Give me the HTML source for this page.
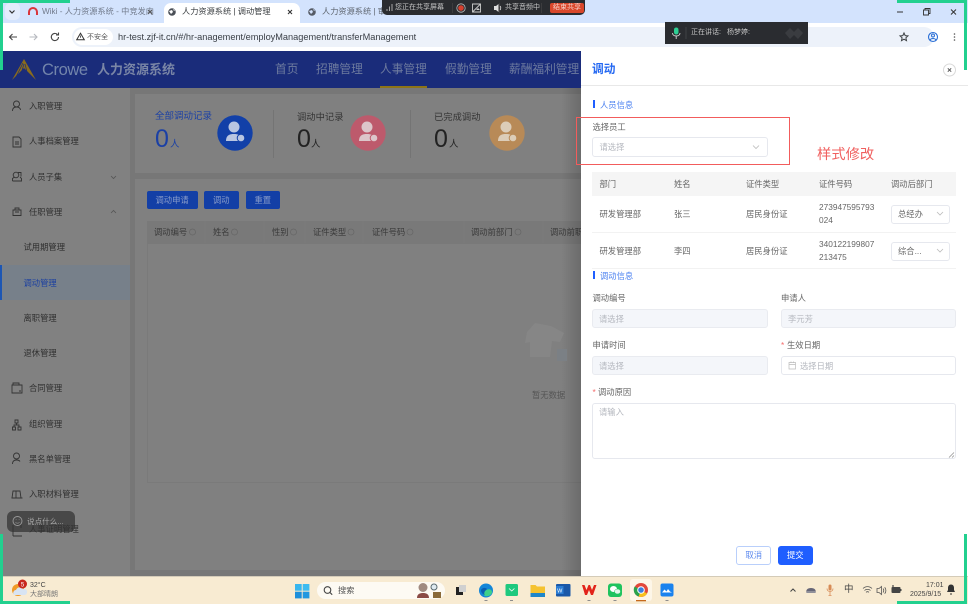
<!DOCTYPE html>
<html lang="zh">
<head>
<meta charset="utf-8">
<title>人力资源系统 | 调动管理</title>
<style>
html,body{margin:0;padding:0;background:#fff}
#p{position:relative;width:968px;height:605px;overflow:hidden;background:#fff;font-family:"Liberation Sans","Noto Sans CJK SC",sans-serif;font-size:8.3px;color:#555;filter:blur(.35px)}
.t{position:absolute;white-space:nowrap;line-height:16px;height:16px}
.r{position:absolute;box-sizing:border-box}
svg{position:absolute;left:0;top:0}
.s{color:#303030}
.h{color:#3a3a3a}
.n{color:#6e7b9f;font-size:11.7px}
.b{color:#2468f2}
.g{color:#666}
.ph{color:#b5b8bf}
.d{color:#c4c4c4;font-size:7px}
</style>
</head>
<body>
<div id="p">
<!-- browser chrome -->
<div class="r" style="left:0;top:0;width:968px;height:23px;background:#d3e3fd"></div>
<div class="r" style="left:0;top:23px;width:968px;height:28px;background:#fff"></div>
<div class="r" style="left:5px;top:3px;width:15px;height:17px;background:#e3ecfc;border-radius:5px"></div>
<div class="r" style="left:164px;top:3px;width:136px;height:20px;background:#fff;border-radius:7px 7px 0 0"></div>
<div class="r" style="left:72px;top:27px;width:862px;height:20px;background:#edf2fa;border-radius:10px"></div>
<div class="r" style="left:74px;top:29px;width:39px;height:16px;background:#fff;border-radius:8px"></div>
<div class="t" style="left:42px;top:4px;color:#727b8c;font-size:8.2px">Wiki - 人力资源系统 - 中竞发内</div>
<div class="t" style="left:182px;top:4px;color:#3c4043;font-size:8.2px">人力资源系统 | 调动管理</div>
<div class="t" style="left:322px;top:4px;color:#5f6670;font-size:8.2px">人力资源系统 | 审批</div>
<div class="t" style="left:87px;top:30px;color:#555;font-size:7px">不安全</div>
<div class="t" style="left:118px;top:29px;color:#3a3f46;font-size:9.2px">hr-test.zjf-it.cn/#/hr-anagement/employManagement/transferManagement</div>

<!-- header -->
<div class="r" style="left:0;top:51px;width:581px;height:37px;background:#1a2c7a"></div>
<div class="t" style="left:42px;top:61px;color:#7385ab;font-size:16.5px;line-height:18px;height:18px;letter-spacing:-.4px">Crowe</div>
<div class="t" style="left:97px;top:62px;color:#7a86a6;font-size:13px;font-weight:bold">人力资源系统</div>
<div class="t n" style="left:275px;top:62px">首页</div>
<div class="t n" style="left:316px;top:62px">招聘管理</div>
<div class="t n" style="left:380px;top:62px">人事管理</div>
<div class="t n" style="left:445px;top:62px">假勤管理</div>
<div class="t n" style="left:509px;top:62px">薪酬福利管理</div>
<div class="r" style="left:380px;top:86px;width:47px;height:2px;background:#8d7417"></div>

<!-- masked page -->
<div class="r" style="left:0;top:88px;width:581px;height:488px;background:#777"></div>
<div class="r" style="left:0;top:88px;width:130px;height:488px;background:#818181"></div>
<div class="r" style="left:135px;top:94px;width:446px;height:79px;background:#808080"></div>
<div class="r" style="left:135px;top:179px;width:446px;height:391px;background:#808080"></div>
<div class="r" style="left:0;top:265px;width:130px;height:35px;background:#77808a"></div>
<div class="r" style="left:0;top:265px;width:1.5px;height:35px;background:#1c56b4"></div>

<div class="t s" style="left:29px;top:98px">入职管理</div>
<div class="t s" style="left:29px;top:133px">人事档案管理</div>
<div class="t s" style="left:29px;top:169px">人员子集</div>
<div class="t s" style="left:29px;top:204px">任职管理</div>
<div class="t s" style="left:23.5px;top:239px">试用期管理</div>
<div class="t" style="left:23.5px;top:274.5px;color:#1c40a0">调动管理</div>
<div class="t s" style="left:23.5px;top:310px">离职管理</div>
<div class="t s" style="left:23.5px;top:345px">退休管理</div>
<div class="t s" style="left:29px;top:380px">合同管理</div>
<div class="t s" style="left:29px;top:415.5px">组织管理</div>
<div class="t s" style="left:29px;top:451px">黑名单管理</div>
<div class="t s" style="left:29px;top:486px">入职材料管理</div>
<div class="t s" style="left:29px;top:521px">人事证明管理</div>
<div class="r" style="left:7px;top:511px;width:68px;height:21px;background:rgba(50,50,50,.72);border-radius:6px"></div>
<div class="t" style="left:27px;top:514px;color:#aaa;font-size:7.6px">说点什么...</div>

<!-- stats -->
<div class="t" style="left:155px;top:109px;color:#1b40a5;font-size:9.5px">全部调动记录</div>
<div class="t" style="left:155px;top:125px;color:#1b40a5;font-size:25px;line-height:28px;height:28px">0</div>
<div class="t" style="left:170px;top:137px;color:#1b40a5;font-size:9.5px">人</div>
<div class="t" style="left:297px;top:109px;color:#333;font-size:9.3px">调动中记录</div>
<div class="t" style="left:297px;top:125px;color:#222;font-size:25px;line-height:28px;height:28px">0</div>
<div class="t" style="left:311px;top:137px;color:#222;font-size:9.5px">人</div>
<div class="t" style="left:434px;top:109px;color:#333;font-size:9.3px">已完成调动</div>
<div class="t" style="left:434px;top:125px;color:#222;font-size:25px;line-height:28px;height:28px">0</div>
<div class="t" style="left:449px;top:137px;color:#222;font-size:9.5px">人</div>
<div class="r" style="left:272.5px;top:110px;width:1px;height:48px;background:#747474"></div>
<div class="r" style="left:410px;top:110px;width:1px;height:48px;background:#747474"></div>

<!-- buttons -->
<div class="r" style="left:147px;top:191px;width:50.5px;height:18px;background:#133fa6;border-radius:2px"></div>
<div class="r" style="left:204px;top:191px;width:34.5px;height:18px;background:#133fa6;border-radius:2px"></div>
<div class="r" style="left:245.5px;top:191px;width:34px;height:18px;background:#133fa6;border-radius:2px"></div>
<div class="t" style="left:155.5px;top:192px;color:#8a9cc9">调动申请</div>
<div class="t" style="left:213px;top:192px;color:#8a9cc9">调动</div>
<div class="t" style="left:254.5px;top:192px;color:#8a9cc9">重置</div>

<!-- table -->
<div class="r" style="left:147px;top:221px;width:434px;height:262px;border:1px solid #7a7a7a;border-right:0"></div>
<div class="r" style="left:147px;top:221px;width:434px;height:22.5px;background:#797979"></div>
<div class="t h" style="left:154px;top:224px">调动编号</div>
<div class="t h" style="left:213px;top:224px">姓名</div>
<div class="t h" style="left:272px;top:224px">性别</div>
<div class="t h" style="left:313px;top:224px">证件类型</div>
<div class="t h" style="left:372px;top:224px">证件号码</div>
<div class="t h" style="left:471px;top:224px">调动前部门</div>
<div class="t h" style="left:550px;top:224px">调动前职</div>
<div class="t" style="left:532px;top:387px;color:#555">暂无数据</div>

<!-- drawer -->
<div class="r" style="left:561px;top:88px;width:20px;height:488px;background:linear-gradient(90deg,rgba(0,0,0,0),rgba(0,0,0,.16))"></div>
<div class="r" style="left:581px;top:51px;width:387px;height:525px;background:#fff"></div>
<div class="r" style="left:581px;top:85px;width:387px;height:1px;background:#e8e8e8"></div>
<div class="t b" style="left:592px;top:62px;font-size:11.7px;font-weight:bold">调动</div>

<div class="r" style="left:592.5px;top:100px;width:2px;height:8px;background:#1f5eff"></div>
<div class="t" style="left:600px;top:96.5px;color:#4a80f0">人员信息</div>
<div class="t g" style="left:592.5px;top:119px">选择员工</div>
<div class="r" style="left:592px;top:137px;width:175.5px;height:19.5px;border:1px solid #e6e8ee;border-radius:3px"></div>
<div class="t ph" style="left:599.5px;top:139px">请选择</div>
<div class="r" style="left:576px;top:117px;width:214px;height:48px;border:1.5px solid #f25c5c"></div>
<div class="t" style="left:817px;top:147px;color:#f0605f;font-size:14.3px">样式修改</div>

<div class="r" style="left:592px;top:172px;width:364px;height:24px;background:#f5f5f5"></div>
<div class="t g" style="left:599.5px;top:176px">部门</div>
<div class="t g" style="left:674px;top:176px">姓名</div>
<div class="t g" style="left:746px;top:176px">证件类型</div>
<div class="t g" style="left:819px;top:176px">证件号码</div>
<div class="t g" style="left:891px;top:176px">调动后部门</div>
<div class="r" style="left:592px;top:232px;width:364px;height:1px;background:#f2f2f2"></div>
<div class="r" style="left:592px;top:268px;width:364px;height:1px;background:#f2f2f2"></div>
<div class="t g" style="left:599.5px;top:205.5px">研发管理部</div>
<div class="t g" style="left:674px;top:205.5px">张三</div>
<div class="t g" style="left:746px;top:205.5px">居民身份证</div>
<div class="t g" style="left:819px;top:198.5px">273947595793</div>
<div class="t g" style="left:819px;top:212px">024</div>
<div class="r" style="left:891px;top:204.5px;width:58.5px;height:19.5px;border:1px solid #e6e8ee;border-radius:3px"></div>
<div class="t g" style="left:898px;top:206px">总经办</div>
<div class="t g" style="left:599.5px;top:242.5px">研发管理部</div>
<div class="t g" style="left:674px;top:242.5px">李四</div>
<div class="t g" style="left:746px;top:242.5px">居民身份证</div>
<div class="t g" style="left:819px;top:235.5px">340122199807</div>
<div class="t g" style="left:819px;top:249px">213475</div>
<div class="r" style="left:891px;top:241.5px;width:58.5px;height:19.5px;border:1px solid #e6e8ee;border-radius:3px"></div>
<div class="t g" style="left:898px;top:243px">综合...</div>

<div class="r" style="left:592.5px;top:271px;width:2px;height:8px;background:#1f5eff"></div>
<div class="t" style="left:600px;top:268px;color:#4a80f0">调动信息</div>
<div class="t g" style="left:592.5px;top:290px">调动编号</div>
<div class="t g" style="left:781px;top:290px">申请人</div>
<div class="r" style="left:592px;top:309px;width:175.5px;height:19px;background:#f4f6fa;border:1px solid #e9ebf0;border-radius:3px"></div>
<div class="r" style="left:781px;top:309px;width:175px;height:19px;background:#f4f6fa;border:1px solid #e9ebf0;border-radius:3px"></div>
<div class="t ph" style="left:599px;top:310.5px">请选择</div>
<div class="t ph" style="left:788px;top:311px">李元芳</div>
<div class="t g" style="left:592.5px;top:337px">申请时间</div>
<div class="t" style="left:781px;top:337px;color:#f56c6c">*</div>
<div class="t g" style="left:787px;top:337px">生效日期</div>
<div class="r" style="left:592px;top:356px;width:175.5px;height:19px;background:#f4f6fa;border:1px solid #e9ebf0;border-radius:3px"></div>
<div class="r" style="left:781px;top:356px;width:175px;height:19px;border:1px solid #e6e8ee;border-radius:3px"></div>
<div class="t ph" style="left:599px;top:357.5px">请选择</div>
<div class="t ph" style="left:800px;top:357.5px">选择日期</div>
<div class="t" style="left:592.5px;top:384px;color:#f56c6c">*</div>
<div class="t g" style="left:598px;top:384px">调动原因</div>
<div class="r" style="left:592px;top:403px;width:364px;height:55.5px;border:1px solid #e6e8ee;border-radius:3px"></div>
<div class="t ph" style="left:599px;top:404px">请输入</div>

<div class="r" style="left:736px;top:546px;width:35px;height:18.5px;border:1px solid #b9cffb;border-radius:3px;background:#fff"></div>
<div class="r" style="left:778px;top:546px;width:34.5px;height:18.5px;background:#1f5eff;border-radius:3px"></div>
<div class="t" style="left:745.5px;top:547px;color:#5b88ee">取消</div>
<div class="t" style="left:787px;top:547px;color:#fff">提交</div>

<!-- taskbar -->
<div class="r" style="left:0;top:576px;width:968px;height:28px;background:#f8ebd2;border-top:1px solid #d4cbb8"></div>
<div class="r" style="left:0;top:604px;width:968px;height:1px;background:#fff"></div>
<div class="t" style="left:30px;top:577.5px;color:#444;font-size:7px">32°C</div>
<div class="t" style="left:30px;top:587px;color:#777;font-size:7px">大部晴朗</div>
<div class="r" style="left:317px;top:582px;width:128px;height:17px;background:#fdfaf3;border-radius:9px"></div>
<div class="t" style="left:338px;top:582.5px;color:#555;font-size:8.2px">搜索</div>
<div class="r" style="left:630px;top:579px;width:22px;height:22px;background:#fdf6e8;border-radius:3px"></div>
<div class="t" style="left:844px;top:582px;color:#444;font-size:9.5px">中</div>
<div class="t" style="left:926px;top:577.5px;color:#444;font-size:7px">17:01</div>
<div class="t" style="left:910px;top:587px;color:#444;font-size:7px">2025/9/15</div>

<!-- green frame -->
<div class="r" style="left:0;top:0;width:70px;height:3px;background:#22d08f"></div>
<div class="r" style="left:0;top:0;width:3px;height:70px;background:#22d08f"></div>
<div class="r" style="left:897px;top:0;width:70px;height:3px;background:#22d08f"></div>
<div class="r" style="left:964px;top:0;width:3px;height:70px;background:#22d08f"></div>
<div class="r" style="left:0;top:534px;width:3px;height:70px;background:#22d08f"></div>
<div class="r" style="left:0;top:601px;width:70px;height:3px;background:#22d08f"></div>
<div class="r" style="left:897px;top:601px;width:70px;height:3px;background:#22d08f"></div>
<div class="r" style="left:964px;top:534px;width:3px;height:70px;background:#22d08f"></div>

<!-- meeting overlays -->
<div class="r" style="left:382px;top:0;width:203px;height:15px;background:#2a2c30;border-radius:0 0 5px 5px"></div>
<div class="r" style="left:550px;top:3px;width:34px;height:10px;background:#d9472b;border-radius:2px"></div>
<div class="t d" style="left:395px;top:0">您正在共享屏幕</div>
<div class="t d" style="left:505px;top:0">共享音频中</div>
<div class="t" style="left:553px;top:0;color:#f5d0c8;font-size:7px">结束共享</div>
<div class="r" style="left:665px;top:22px;width:143px;height:22px;background:#2a2c30"></div>
<div class="t d" style="left:691px;top:25px">正在讲话:</div>
<div class="t d" style="left:727px;top:25px">杨梦婷:</div>

<!-- icons -->
<svg width="968" height="605" viewBox="0 0 968 605" fill="none">
<!-- tabs -->
<path d="M9.5 10.5l2.500 2.500 2.500-2.500" stroke="#333" stroke-width="1.2"/>
<path d="M29 15v-3a4 4 0 0 1 8 0v3" stroke="#d9353b" stroke-width="2"/>
<circle cx="172" cy="12" r="3.800" fill="#4a4f57"/><path d="M169 11l3-1 1 2-2 2zM173 9l2 1-1 1z" fill="#fff"/>
<circle cx="312" cy="12" r="3.800" fill="#555b66"/><path d="M309 11l3-1 1 2-2 2zM313 9l2 1-1 1z" fill="#d3e3fd"/>
<path d="M148 10l4 4m0-4l-4 4" stroke="#555" stroke-width="1"/>
<path d="M288 10l4 4m0-4l-4 4" stroke="#333" stroke-width="1.1"/>
<path d="M897 12h6" stroke="#333" stroke-width="1"/>
<path d="M923.500 10h5v5h-5zM925 10V8.500h5v5h-1.500" stroke="#333" stroke-width=".9"/>
<path d="M951 9.500l5 5m0-5l-5 5" stroke="#333" stroke-width="1"/>
<!-- nav -->
<path d="M17 37H9.500m3-3l-3 3 3 3" stroke="#444" stroke-width="1.1"/>
<path d="M29.500 37H37m-3-3l3 3-3 3" stroke="#b6b9bf" stroke-width="1.1"/>
<path d="M58.500 37a3.600 3.600 0 1 1-1-2.500M58.500 32.500v2.500H56" stroke="#444" stroke-width="1.1"/>
<path d="M80.500 33.200l3.800 6.500h-7.600z" stroke="#333" stroke-width="1"/><path d="M80.500 35.500v2.200" stroke="#333" stroke-width=".8"/>
<path d="M904 33l1.200 2.600 2.800.3-2.100 1.900.6 2.800-2.500-1.400-2.500 1.400.6-2.800-2.100-1.900 2.800-.3z" stroke="#3c4043" stroke-width="1"/>
<circle cx="933" cy="37" r="4.500" stroke="#2a6fd6" stroke-width="1.100"/><circle cx="933" cy="35.500" r="1.500" stroke="#2a6fd6"/><path d="M930 40c1-2 5-2 6 0" stroke="#2a6fd6"/>
<circle cx="954.500" cy="34" r=".8" fill="#555"/><circle cx="954.500" cy="37" r=".8" fill="#555"/><circle cx="954.500" cy="40" r=".8" fill="#555"/>
<!-- logo -->
<path d="M12 80L24 59l12 21-12-12z" fill="#8a6c1c"/><path d="M23 63l-7 14M24 64l-4 13M25 64l3 12" stroke="#1a2c7a" stroke-width=".7"/>
<!-- sidebar icons -->
<g stroke="#333" stroke-width=".9">
<circle cx="16.500" cy="104" r="3"/><path d="M12.500 111c0-3 2-4 4-4s4 1 4 3"/>
<path d="M13 137h6l2 2v8h-8zM15 142h4M15 144h4"/>
<circle cx="16" cy="175" r="2.800"/><path d="M12.500 181v-2.500l2-1.500M20 177l1.500 1.500v2.500h-9M18 172.500h3v4"/>
<path d="M13 210h8v5.500h-8zM15 210v-2h4v2M15 212h4"/>
<path d="M12 385h10v8H12zM13 385v-2h6v2M19 391h2"/>
<path d="M15 420h3v3h-3zM12.500 427h3v3h-3zM18 427h3v3h-3zM16.500 423v2M14 427v-2h5v2"/>
<circle cx="16.500" cy="456" r="3"/><path d="M12.500 464c0-3 2-4 4-4s3 .5 3.500 1.500"/>
<path d="M13 491h7l1 7H12zM11.500 498h11M16 491v7"/>
<path d="M13 525v11M13 536h9M16 524h5v4"/>
</g>
<path d="M111 176l2.500 2.500 2.500-2.500" stroke="#555" stroke-width=".8"/>
<path d="M111 213l2.500-2.500 2.500 2.500" stroke="#555" stroke-width=".8"/>
<circle cx="17.500" cy="521" r="4.500" stroke="#9a9a9a" stroke-width=".9"/><path d="M15.500 522.500c1 1 3 1 4 0M15.800 519.500h.6M18.800 519.500h.6" stroke="#9a9a9a" stroke-width=".8"/>
<!-- stat circles -->
<circle cx="235" cy="133" r="17.700" fill="#1240a8"/>
<circle cx="368" cy="133" r="17.700" fill="#bd5a6c"/>
<circle cx="507" cy="133" r="17.700" fill="#b88a57"/>
<g fill="#b9c6e2"><circle cx="234" cy="127" r="5.500"/><path d="M226 141c0-6 4-7 8-7s6 1 7 4l-2 3z"/></g>
<circle cx="241" cy="138" r="3.800" fill="#b9c6e2" stroke="#1240a8"/>
<g fill="#dcc6ca"><circle cx="367" cy="127" r="5.500"/><path d="M359 141c0-6 4-7 8-7s6 1 7 4l-2 3z"/></g>
<circle cx="374" cy="138" r="3.800" fill="#dcc6ca" stroke="#bd5a6c"/>
<g fill="#dccdb8"><circle cx="506" cy="127" r="5.500"/><path d="M498 141c0-6 4-7 8-7s6 1 7 4l-2 3z"/></g>
<circle cx="513" cy="138" r="3.800" fill="#dccdb8" stroke="#b88a57"/>
<!-- table header search icons -->
<g stroke="#666" stroke-width=".7"><circle cx="192.500" cy="232" r="3"/><circle cx="234.500" cy="232" r="3"/><circle cx="293.500" cy="232" r="3"/><circle cx="351" cy="232" r="3"/><circle cx="410" cy="232" r="3"/><circle cx="518" cy="232" r="3"/></g>
<path d="M205 221v22M264 221v22M305 221v22M363 221v22M464 221v22M543 221v22" stroke="#7d7d7d" stroke-width=".8"/>
<!-- empty state -->
<path d="M527 332l8-9 16 3 13 7-4 9-8-1-2 16h-20v-15l-5 1z" fill="#868686"/><path d="M557 349h10v12h-10z" fill="#7b8085"/>
<!-- drawer icons -->
<circle cx="949.500" cy="70" r="6" stroke="#d9d9d9" fill="#fff"/><path d="M947.800 68.300l3.400 3.400m0-3.400l-3.400 3.400" stroke="#555" stroke-width="1"/>
<g stroke="#bbb" stroke-width=".8"><path d="M753 145.500l3 3 3-3M937 212l3 3 3-3M937 249l3 3 3-3"/></g>
<path d="M789 362.500h6.500v6.500H789zM789 364.500h6.500M791 361.500v1.500M793.500 361.500v1.500" stroke="#bbb" stroke-width=".7"/>
<path d="M949 457.500l5-5M952 457.500l2-2" stroke="#888" stroke-width=".7"/>
<!-- taskbar -->
<circle cx="18" cy="590" r="6" fill="#f09a26"/><path d="M14 595a3 3 0 0 1 2-5 4 4 0 0 1 7-1 3 3 0 0 1 2 6z" fill="#d8e4f3"/>
<circle cx="22.500" cy="584" r="4.500" fill="#c8261c"/><text x="22.500" y="586.300" font-size="6" fill="#fff" text-anchor="middle" font-family="Liberation Sans">5</text>
<path d="M295 584h6.700v6.700H295z" fill="#37b6ee"/><path d="M302.700 584h6.700v6.700h-6.700z" fill="#3dbcf0"/><path d="M295 591.700h6.700v6.700H295z" fill="#1c8fdb"/><path d="M302.700 591.700h6.700v6.700h-6.700z" fill="#2298e0"/>
<circle cx="327.500" cy="590" r="3.300" stroke="#444" stroke-width="1.100"/><path d="M330 592.500l2.200 2.200" stroke="#444" stroke-width="1.100"/>
<circle cx="423" cy="587.500" r="4.500" fill="#a08a80"/><path d="M417 598c0-4 3-5 6-5s6 1 6 5z" fill="#8a4a44"/><circle cx="434" cy="587" r="3" stroke="#5a6a70" fill="#dfeaf0"/><path d="M433 592h8v6h-8z" fill="#8a6a3a"/>
<path d="M456 587h7v8h-7z" fill="#222"/><path d="M459 585h7v7h-7z" fill="#d0d0d0"/>
<circle cx="486" cy="590.500" r="7" fill="#1486d8"/><path d="M485 591c3-3 7-2 7 1 0 3-4 5-7 4-2-1-2-3 0-5z" fill="#3fd08a"/><path d="M481 590c1-2 4-3 6-1l-2 2c-1 2-1 3 0 4-3-1-4-3-4-5z" fill="#0b5fb0"/>
<rect x="505.500" y="584" width="12.500" height="12" rx="1.500" fill="#1ec97e"/><path d="M509 588.500l2.700 2.500 2.700-2.500" stroke="#fff" stroke-width=".8"/>
<path d="M530.500 585h5l1.500 1.500h8v10.500h-14.500z" fill="#f5c22f"/><path d="M530.500 593h14.500v4h-14.500z" fill="#1e86c9"/>
<rect x="556" y="584" width="14.500" height="12.500" rx="1" fill="#1a58a8"/><rect x="556" y="586" width="7.500" height="8" fill="#2b7cd3"/><text x="559.700" y="592.500" font-size="5.500" fill="#fff" text-anchor="middle" font-family="Liberation Sans">W</text>
<path d="M582 585h2.500l2 5 2-5h1.500l2 5 2-5h2.500l-3.500 10h-2l-2-5-2 5h-2z" fill="#e2231a"/>
<rect x="608" y="583.500" width="14" height="13.500" rx="3" fill="#1fc35e"/><ellipse cx="613.500" cy="589" rx="3.500" ry="3" fill="#fff"/><ellipse cx="617.500" cy="591.500" rx="3" ry="2.500" fill="#e4f7ea" stroke="#1fc35e" stroke-width=".5"/>
<circle cx="641" cy="590" r="7" fill="#e2483b"/><path d="M641 590l6.100 3.500a7 7 0 0 1-8.500 3z" fill="#f8c21d"/><path d="M641 590l-2.400 6.500a7 7 0 0 1-4-10z" fill="#2ba24c"/><circle cx="641" cy="590" r="3.300" fill="#3a7fe0" stroke="#fff" stroke-width="1"/>
<rect x="636" y="600" width="10" height="1.300" fill="#c66a1d"/>
<rect x="660.500" y="583.500" width="13" height="13" rx="2" fill="#1a82ee"/><path d="M662 592.500l2.500-3 2 2 1.500-2.500 2 2.500 2 1z" fill="#fff"/>
<g fill="#8d8d8d"><rect x="484.500" y="600" width="3" height="1"/><rect x="510" y="600" width="3" height="1"/><rect x="587.500" y="600" width="3" height="1"/><rect x="613.500" y="600" width="3" height="1"/><rect x="665.500" y="600" width="3" height="1"/></g>
<path d="M790.500 591.500l2.500-2.500 2.500 2.500" stroke="#444" stroke-width="1"/>
<path d="M806.500 593c-1-3 1-5 4.500-5s5.500 2 4.500 5z" fill="#667"/><path d="M806.500 592h9" stroke="#ddd" stroke-width=".7"/>
<rect x="828.500" y="584.500" width="3" height="6" rx="1.500" fill="#d78b55"/><path d="M827 588.500c0 4 6 4 6 0M830 592v3M828.500 595.500h3" stroke="#d78b55" stroke-width=".8"/>
<path d="M863 588.500c2.500-2.500 6.500-2.500 9 0M864.500 590.500c1.500-1.500 4.500-1.500 6 0M866 592.300c1-.8 2-.8 3 0" stroke="#555" stroke-width=".8"/>
<path d="M877 588.500h2l2.500-2v8l-2.500-2h-2zM883 588.500c1 1 1 3 0 4M884.700 587.300c1.600 1.800 1.600 4.600 0 6.400" stroke="#555" stroke-width=".8"/>
<rect x="891.500" y="587" width="9" height="6" rx="1" fill="#444"/><path d="M893 587v-2" stroke="#444" stroke-width="1.200"/><rect x="900.500" y="589" width="1" height="2" fill="#444"/>
<path d="M951 584.500c-2 0-3 1.500-3 3.500v2l-1 2h8l-1-2v-2c0-2-1-3.500-3-3.500zM950 593.500h2v1h-2z" fill="#333"/>
<!-- overlays -->
<path d="M387 11V9M389.500 11V6.500M392 11V4" stroke="#a8a8a8" stroke-width="1"/>
<path d="M452.500 3v10M499.500 3v10M541.500 3v10" stroke="#444" stroke-width=".7"/>
<circle cx="461" cy="8" r="4.200" stroke="#bbb" stroke-width=".8"/><circle cx="461" cy="8" r="2.800" fill="#d6402f"/>
<path d="M472.500 4h8v8h-8zM472.500 12l8-8" stroke="#ccc" stroke-width=".9"/><path d="M476 10l2-2 2 2z" fill="#ccc"/>
<path d="M494 6h2l2.500-2v8L496 10h-2z" fill="#ddd"/><path d="M500 6c1 1 1 3 0 4" stroke="#ddd" stroke-width=".8"/>
<rect x="674" y="27.500" width="4.500" height="7" rx="2.200" fill="#2ecf94"/><path d="M672.500 33c0 4 7.500 4 7.500 0M676.200 36.500v2.500" stroke="#d5d5d5" stroke-width=".9"/>
<path d="M686 27v12" stroke="#4a4c50" stroke-width=".7"/>
<path d="M785 33l5-5 4 4 4-4 5 5-5 6-4-4-4 4z" fill="#3a3c40"/>
</svg>
</div>
</body>
</html>
